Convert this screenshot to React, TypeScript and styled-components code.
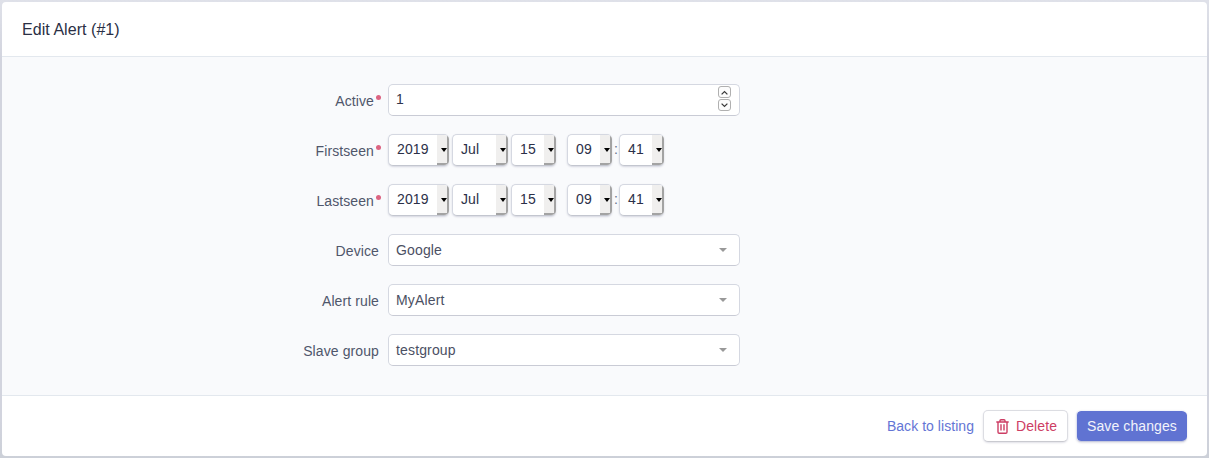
import React from 'react';
import styled, { createGlobalStyle } from 'styled-components';

const Global = createGlobalStyle`
  * { box-sizing: border-box; }
  body {
    margin: 0;
    background: linear-gradient(#dfe1e9, #d2d4de 60px, #d2d4de 420px, #ccd0d8);
    font: 14px/20px "Liberation Sans", Arial, sans-serif;
    letter-spacing: 0.1px;
    color: #525f7f;
    overflow: hidden;
  }
`;

const Page = styled.div`
  height: 458px;
  padding: 2px;
`;

const Card = styled.main`
  height: 454px;
  display: flex;
  flex-direction: column;
  background: #fff;
  border-radius: 4px;
  overflow: hidden;
`;

const Header = styled.header`
  height: 55px;
  flex: none;
  padding: 0 20px;
  border-bottom: 1px solid #e3e8ee;
  font-size: 16px;
  line-height: 55px;
  letter-spacing: 0.05px;
`;

const Title = styled.h1`
  margin: 0;
  font: inherit;
  color: #2a2f45;
`;

const Body = styled.form`
  flex: 1;
  display: flex;
  flex-direction: column;
  gap: 18px;
  padding: 27px 0 0;
  background: #f9fafc;
`;

const Row = styled.div`
  display: flex;
  height: 32px;
`;

const Label = styled.label`
  width: 377px;
  margin-right: 9px;
  display: flex;
  justify-content: flex-end;
  padding-top: 7px;
  color: #4f566b;
`;

const Required = styled.i`
  width: 5px;
  height: 5px;
  margin: 4px -2px 0 2px;
  border-radius: 50%;
  background: #dc6482;
`;

const Control = styled.div`
  width: 352px;
  height: 32px;
  display: flex;
  justify-content: space-between;
  padding: 0 7px;
  border: 1px solid #d5d8e1;
  border-bottom-color: #c9cbd5;
  border-radius: 5px;
  background: #fff;
  line-height: 30px;
  letter-spacing: 0.15px;
  color: #4b5063;
`;

const NumberText = styled.span`
  line-height: 28px;
  color: #32364d;
`;

const Stepper = styled.span`
  display: flex;
  flex-direction: column;
  gap: 1px;
  padding-top: 1px;
  margin-right: 1px;
`;

const Step = styled.span`
  width: 13px;
  height: 12px;
  display: flex;
  align-items: center;
  justify-content: center;
  border: 1px solid #b0b0b0;
  border-radius: 3px;
  background: #fcfcfc;
`;

const Caret = styled.span`
  width: 0;
  height: 0;
  margin: 13px 5px 0 0;
  border: 4px solid transparent;
  border-top-color: #999;
  border-bottom: 0;
`;

const Dates = styled.div`
  display: flex;
`;

const DateSelect = styled.span<{ $width: number; $gap?: number }>`
  width: ${p => p.$width}px;
  height: 32px;
  margin-right: ${p => p.$gap ?? 0}px;
  padding-left: 8px;
  display: flex;
  justify-content: space-between;
  border: 1px solid #d5d8e1;
  border-right: 0;
  border-bottom-color: #c3c6cf;
  border-radius: 5px;
  overflow: hidden;
  background: #fff;
  box-shadow: 0 1px 2px rgba(50, 50, 93, 0.18);
  line-height: 28px;
  color: #2c3048;
`;

const DropButton = styled.span`
  width: 12px;
  height: 30px;
  display: flex;
  align-items: center;
  justify-content: center;
  background: #f0efee;
  box-shadow: inset -2px -2px 0 #a3a3a3;
`;

const DropArrow = styled.i`
  margin-left: 1px;
  border: 4px solid transparent;
  border-width: 4px 3.5px 0;
  border-top-color: #000;
`;

const Colon = styled.span`
  width: 7px;
  padding-left: 2px;
  line-height: 31px;
  color: #66708a;
`;

const Footer = styled.footer`
  height: 61px;
  flex: none;
  display: flex;
  justify-content: flex-end;
  padding: 14px 20px 0;
  border-top: 1px solid #e3e8ee;
`;

const BackLink = styled.a`
  margin-right: 9px;
  line-height: 32px;
  letter-spacing: 0.05px;
  color: #6475d5;
`;

const DeleteButton = styled.button`
  width: 85px;
  height: 32px;
  margin-right: 8px;
  padding: 0 0 0 12px;
  display: flex;
  align-items: center;
  border: 1px solid #dcdde2;
  border-bottom-color: #c9cad0;
  border-radius: 5px;
  background: #fff;
  box-shadow: 0 1px 2px rgba(50, 50, 93, 0.15);
  font: inherit;
  letter-spacing: 0.1px;
  color: #cd3d64;
`;

const TrashIcon = styled.svg`
  flex: none;
  margin-right: 7px;
`;

const SaveButton = styled.button`
  width: 111px;
  height: 32px;
  padding: 0;
  border: 1px solid;
  border-right: 0;
  border-color: #f5f6fb #dfe2f2 #c7cbdf;
  border-radius: 5px;
  background: #6073d2;
  background-clip: padding-box;
  box-shadow: 0 1px 2px rgba(50, 50, 93, 0.15);
  font: inherit;
  letter-spacing: 0.1px;
  color: #f2f3fb;
`;

function Arrow({ down = false }: { down?: boolean }) {
  return (
    <svg width="7" height="5" viewBox="0 0 7 5" fill="none" stroke="#3c3c3c" strokeWidth="1.3">
      <path d={down ? 'M.6.6 3.5 3.4 6.4.6' : 'M.6 4.4 3.5 1.6 6.4 4.4'} />
    </svg>
  );
}

function DatePart({ value, width, gap }: { value: string; width: number; gap?: number }) {
  return (
    <DateSelect $width={width} $gap={gap}>
      {value}
      <DropButton><DropArrow /></DropButton>
    </DateSelect>
  );
}

function DateRow({ label }: { label: string }) {
  return (
    <Row>
      <Label>{label}<Required /></Label>
      <Dates>
        <DatePart value="2019" width={61} gap={3} />
        <DatePart value="Jul" width={56} gap={3} />
        <DatePart value="15" width={45} gap={11} />
        <DatePart value="09" width={45} />
        <Colon>:</Colon>
        <DatePart value="41" width={45} />
      </Dates>
    </Row>
  );
}

const choices = [
  ['Device', 'Google'],
  ['Alert rule', 'MyAlert'],
  ['Slave group', 'testgroup'],
];

export default function App() {
  return (
    <Page>
      <Global />
      <Card>
        <Header><Title>Edit Alert (#1)</Title></Header>
        <Body>
          <Row>
            <Label>Active<Required /></Label>
            <Control>
              <NumberText>1</NumberText>
              <Stepper>
                <Step><Arrow /></Step>
                <Step><Arrow down /></Step>
              </Stepper>
            </Control>
          </Row>
          <DateRow label="Firstseen" />
          <DateRow label="Lastseen" />
          {choices.map(([label, value]) => (
            <Row key={label}>
              <Label>{label}</Label>
              <Control>{value}<Caret /></Control>
            </Row>
          ))}
        </Body>
        <Footer>
          <BackLink>Back to listing</BackLink>
          <DeleteButton type="button">
            <TrashIcon width="13" height="15" viewBox="0 0 13 15" fill="none" stroke="currentColor" strokeWidth="1.4">
              <path d="M.3 3h12.4M4 3V1.7Q4 .7 5 .7h3q1 0 1 1V3M2 3v10q0 1.2 1.2 1.2h6.6q1.2 0 1.2-1.2V3M5 5.2v6.3M8 5.2v6.3" />
            </TrashIcon>
            Delete
          </DeleteButton>
          <SaveButton type="button">Save changes</SaveButton>
        </Footer>
      </Card>
    </Page>
  );
}
